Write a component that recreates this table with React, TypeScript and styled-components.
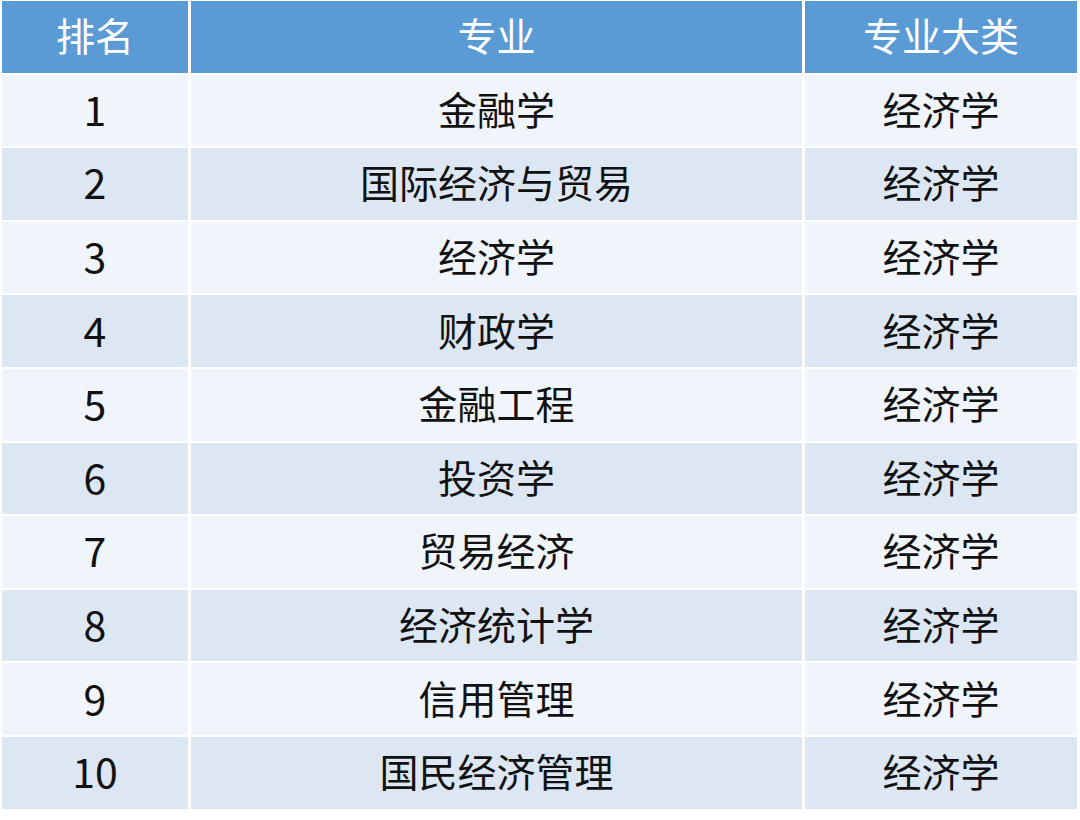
import styled, { createGlobalStyle } from "styled-components";

const GlobalStyle = createGlobalStyle`
  html, body {
    margin: 0;
    padding: 0;
    background: #ffffff;
  }
  body {
    font-family: "Noto Sans CJK SC", "Noto Sans", "Liberation Sans", sans-serif;
  }
`;

const Page = styled.div`
  width: 1080px;
  height: 820px;
  padding: 1px 0 0 2px;
  box-sizing: border-box;
`;

const Table = styled.div`
  display: grid;
  grid-template-columns: 186px 611px 272px;
  grid-auto-rows: 71.6px;
  column-gap: 3px;
  row-gap: 2px;
  width: 1075px;
`;

const Cell = styled.div<{ $variant: "head" | "odd" | "even" }>`
  display: flex;
  align-items: center;
  justify-content: center;
  font-size: 39px;
  line-height: 1;
  background: ${(p) =>
    p.$variant === "head" ? "#5b9bd5" : p.$variant === "odd" ? "#f0f4fb" : "#dce7f3"};
  color: ${(p) => (p.$variant === "head" ? "#ffffff" : "#111111")};
  padding-bottom: 4px;
  box-sizing: border-box;
`;

const Num = styled.span`
  font-size: 41px;
`;

const rows: [string, string, string][] = [
  ["1", "金融学", "经济学"],
  ["2", "国际经济与贸易", "经济学"],
  ["3", "经济学", "经济学"],
  ["4", "财政学", "经济学"],
  ["5", "金融工程", "经济学"],
  ["6", "投资学", "经济学"],
  ["7", "贸易经济", "经济学"],
  ["8", "经济统计学", "经济学"],
  ["9", "信用管理", "经济学"],
  ["10", "国民经济管理", "经济学"],
];

export default function App() {
  return (
    <Page>
      <GlobalStyle />
      <Table>
        <Cell $variant="head">排名</Cell>
        <Cell $variant="head">专业</Cell>
        <Cell $variant="head">专业大类</Cell>
        {rows.map(([rank, major, group], i) => {
          const v = i % 2 === 0 ? "odd" : "even";
          return [
            <Cell key={`${i}-r`} $variant={v}>
              <Num>{rank}</Num>
            </Cell>,
            <Cell key={`${i}-m`} $variant={v}>
              {major}
            </Cell>,
            <Cell key={`${i}-g`} $variant={v}>
              {group}
            </Cell>,
          ];
        })}
      </Table>
    </Page>
  );
}
